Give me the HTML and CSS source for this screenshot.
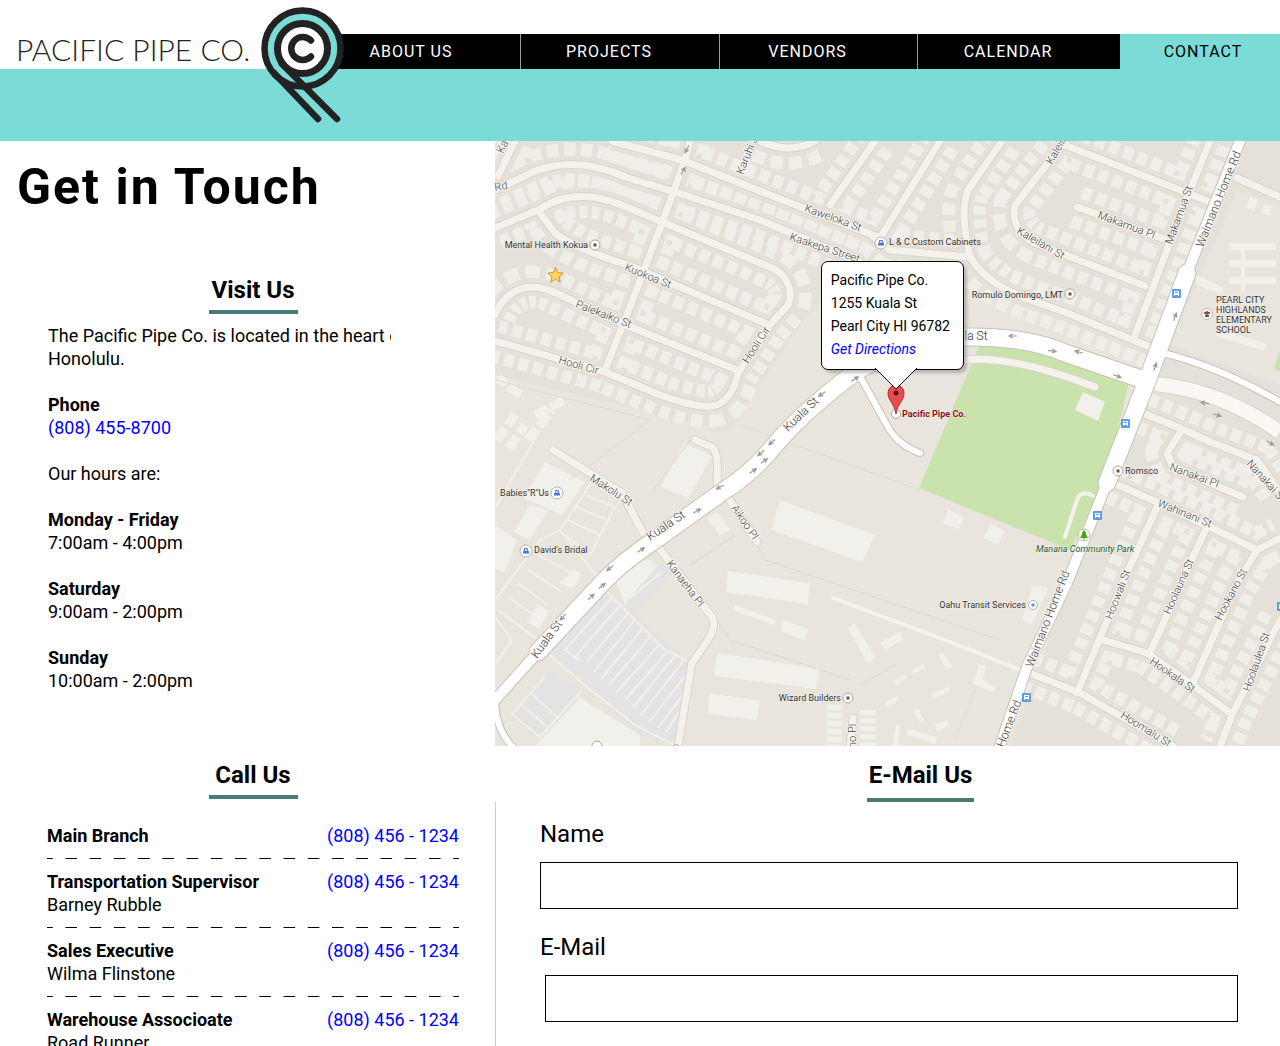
FILE: index.html
```html
<!DOCTYPE html>
<html lang="en">
<head>
<meta charset="utf-8">
<meta name="viewport" content="width=device-width, initial-scale=1">
<title>Contact - Pacific Pipe Co.</title>
<link rel="stylesheet" href="styles.css">
</head>
<body>
<header class="site-header">
  <div class="top-bar">
    <a class="brand" href="#">PACIFIC PIPE CO.</a>
    <nav class="main-nav" aria-label="Main">
      <a href="#">ABOUT US</a>
      <a href="#">PROJECTS</a>
      <a href="#">VENDORS</a>
      <a href="#">CALENDAR</a>
      <a class="current" href="#contact">CONTACT</a>
    </nav>
    <svg class="mark" viewBox="0 0 84 116" aria-hidden="true">
      <circle cx="41.500" cy="41.500" r="38" fill="#7bdbd6" stroke="#222" stroke-width="6.500"/>
      <path d="M13 66 57 112M21 57 76 112" fill="none" stroke="#222" stroke-width="6.500" stroke-linecap="round"/>
      <circle cx="41.500" cy="41.500" r="25" fill="#fff" stroke="#222" stroke-width="7"/>
      <path d="M50 33.500A11.500 11.500 0 1 0 50 49.500" fill="none" stroke="#222" stroke-width="6.500" stroke-linecap="round"/>
    </svg>
  </div>
</header>

<main class="page" id="contact">
  <div class="intro">
    <h1>Get in Touch</h1>
    <section class="visit">
      <h2>Visit Us</h2>
      <div class="visit-text">
        <p>The Pacific Pipe Co. is located in the heart of<br>Honolulu.</p>
        <p><strong>Phone</strong><br><a href="tel:8084558700">(808) 455-8700</a></p>
        <p>Our hours are:</p>
        <p><strong>Monday - Friday</strong><br>7:00am - 4:00pm</p>
        <p><strong>Saturday</strong><br>9:00am - 2:00pm</p>
        <p><strong>Sunday</strong><br>10:00am - 2:00pm</p>
      </div>
    </section>
  </div>

  <div class="map">
    <svg viewBox="495 141 785 605" role="img" aria-label="Street map around Pacific Pipe Co.">
      <defs>
        <g id="blocks">
          <path d="M495 190 535 171Q578 155 628 178L675 192"/>
          <path d="M495 228 538 210C556 198 575 195 592 197C615 200 640 213 662 222L772 268C790 276 793 295 788 305L768 327 738 373C735 390 725 405 712 406C700 408 680 402 660 395L605 372 495 341"/>
          <path d="M538 210 555 233C570 245 595 255 628 265L767 324"/>
          <path d="M690 141 685 160 662 223 625 320 605 370"/>
          <path d="M495 315C502 298 515 288 530 287C545 286 560 295 575 302L628 326 737 370"/>
          <path d="M612 141 682 160 770 195 878 237M873 236 890 250 970 257C985 280 1005 290 1025 298L1067 313 1150 347"/>
          <path d="M675 192 760 220 860 262"/>
          <path d="M875 141 830 205M940 141 880 238"/>
          <path d="M1002 141 968 190C962 205 963 225 970 257"/>
          <path d="M1065 141 1015 205C1011 222 1020 235 1035 243L1145 286"/>
          <path d="M1062 144 1180 190 1212 203"/>
          <path d="M1210 141 1182 210 1135 335"/>
          <path d="M1077 207 1167 240"/>
          <path d="M760 141Q790 155 815 141M515 141 498 176"/>
          <path d="M1113 483 1157 502 1210 527 1257 550 1280 538"/>
          <path d="M1157 507 1127 573 1077 693"/>
          <path d="M1207 527 1190 563 1150 653"/>
          <path d="M1103 640 1147 653 1190 683 1230 713"/>
          <path d="M1257 550 1237 583 1193 683"/>
          <path d="M1280 620 1233 713 1220 746"/>
          <path d="M1027 672 1080 693 1173 746"/>
          <path d="M1180 433 1167 453 1173 467 1243 497"/>
          <path d="M1143 413 1177 427 1213 443 1257 460 1280 493"/>
        </g>
        <g id="lanes">
          <path d="M553 450 622 493 643 533"/>
          <path d="M655 543 712 617C717 628 712 635 692 663L678 746"/>
          <path d="M725 493 757 542M695 440 712 447Q719 452 717 482"/>
          <path d="M1237 178 1280 197"/>
          <path d="M853 718 850 746"/>
          <path d="M963 360Q1013 355 1095 387"/>
        </g>
        <g id="avenues">
          <path d="M538 652 605 580Q625 560 655 540L725 490Q750 475 775 445T845 380Q900 338 963 337T1065 353L1147 381"/>
          <path d="M1187 273 1147 381 1107 483"/>
        </g>
        <g id="roads">
          <path d="M1240 141 1187 273M1107 483 1067 583 1027 667 1000 746"/>
          <path d="M540 650 495 700"/>
        </g>
        <g id="byways">
          <path d="M862 380 888 427Q898 445 920 453"/>
          <path d="M1163 353Q1220 367 1280 402M495 698Q495 730 514 748"/>
        </g>
        <g id="bus"><rect width="9" height="9" rx="1" fill="#5d9df0"/><path d="M2 2h5v4H2z" fill="#fff"/><path d="M3 3h3v1H3z" fill="#5d9df0"/><path d="M2 6h1v1H2zM6 6h1v1H6z" fill="#fff"/></g>
        <g id="shop"><circle r="6" fill="#fff" stroke="#b9b4ab"/><path d="M-2.500-.5h5l.8 3h-6.600z" fill="#4d76d6"/><path d="M-1.500-.5v-2h3v2" fill="none" stroke="#4d76d6"/></g>
        <g id="poi"><circle r="5" fill="#fff" stroke="#aaa59c"/><rect x="-1.500" y="-1.500" width="3" height="3" fill="#7d4a35"/></g>
        <path id="arrow" d="M-4 0H3M0-2 4 0 0 2" fill="none" stroke="#999" stroke-width="1.200"/>
      </defs>

      <rect class="land" x="495" y="141" width="785" height="605"/>
      <path class="district" d="M495 141H1280V746H1010L1105 483 1150 380 1060 345 965 325 850 330 730 432 495 375Z"/>
      <path class="land" d="M850 262Q965 262 990 290L1150 350V480L1010 746H850L730 430 790 340ZM1238 190 1280 205V385L1170 345Z"/>
      <path class="district" d="M1143 410 1280 440V746H1010L1105 483Z"/>
      <use class="houses" href="#blocks"/>
      <use class="verges" href="#blocks"/>

      <g class="buildings">
        <path d="M780 500 875 535 862 562 771 530ZM728 571 810 583 808 604 726 592ZM717 653 820 669 816 689 714 676ZM709 693 760 701 757 720 708 714ZM735 605 776 620 774 625 733 610ZM783 620 808 629 804 640 781 631ZM848 628 855 624 876 658 867 663ZM684 443 712 456 688 498 661 487ZM545 462 585 482 562 515 524 498ZM707 518 717 512 730 530 719 535ZM530 505 548 510 530 540 514 532ZM948 510 964 517 959 529 943 523ZM991 524 1005 531 998 545 983 538ZM1033 585 1048 588 1032 625 1022 620ZM979 664 986 666 983 680 997 688 993 692 973 684ZM880 643 900 632 903 640 885 650ZM610 563 650 560 660 568 625 605ZM575 570 582 575 573 589 559 583ZM580 698 640 735V746H535ZM538 604 549 611 540 629 527 622ZM495 525 517 540 505 572 495 570Z"/>
        <path d="M938 655 942 652 953 667 947 670ZM893 681 905 674 907 678 896 685ZM912 670 924 664 925 668 914 674ZM884 702 897 696 899 700 887 707ZM931 694 949 686 950 691 934 698ZM913 710 919 710 924 721 920 722ZM935 724 947 720 949 726 937 731ZM896 725 900 725 898 746H893ZM908 729 937 737 935 744 907 735ZM1229 243H1276V250H1229ZM1229 260H1276V267H1229ZM1229 277H1276V284H1229ZM1241 243H1245V292H1241ZM1250 197 1258 200 1254 211 1246 208ZM1264 205 1272 206 1270 216 1261 213ZM1219 329 1267 344 1264 351 1216 336ZM1197 275 1224 288 1221 294 1196 285Z"/>
        <path d="M497 440 517 412M509 448 525 425M535 415 565 400M520 395 498 378M528 440 552 410" class="shed"/>
        <path d="M834 705V746M868 710V746" class="shed rows"/>
      </g>

      <g class="parking">
        <path d="M605 590 692 663 676 746 640 735 548 652ZM547 672 584 690 541 738 510 716ZM660 563 673 573 636 614 624 604Z"/>
        <path class="stripes" d="M605 590 630 615 665 650 692 663M612 597 565 650 580 661M620 605 575 657M628 613 586 663M635 620 594 672M643 628 601 679M651 636 609 685M659 645 616 693M667 652 625 700M675 656 633 707M684 660 641 715M690 670 649 722M688 688 658 728M684 705 666 732M550 655 582 683 635 725 676 746M545 677 512 714 540 737 582 690M530 692 558 718M520 704 549 728"/>
        <path class="stripes" d="M540 430 495 508M593 480 560 530 540 540 495 600M560 530 600 580M538 555 575 575M528 570 562 592M518 583 548 605M508 597 538 618M498 610 545 645M585 495 615 507 590 555 565 535M577 507 607 520M568 520 600 535M495 617 512 640 495 665M630 598 662 572"/>
      </g>
      <path class="lines" d="M735 500 765 560 795 570 1000 640M920 490 740 425M717 620 730 640 850 680M650 495 690 440M690 565 735 535M495 380 650 420 570 480M975 690 955 740M860 685 895 665"/>

      <path class="park" d="M983 337Q1060 343 1131 374L1105 483 1070 550 919 488ZM1280 350V372L1274 369Z"/>
      <path class="building" d="M1083 392 1105 402 1098 421 1075 410Z"/>
      <path class="trail" d="M1093 496Q1081 489 1077 500L1065 537"/>
      <path class="trail" d="M833 598 953 643 1025 672"/>

      <use class="edge e-block" href="#blocks"/><use class="edge e-block" href="#lanes"/>
      <use class="fill f-block" href="#blocks"/><use class="fill f-block" href="#lanes"/>
      <path class="wide-edge" d="M1155 384Q1220 390 1280 432"/><path class="wide" d="M1155 384Q1220 390 1280 432"/>
      <use class="edge e-by" href="#byways"/><use class="edge e-road" href="#roads"/><use class="edge e-ave" href="#avenues"/>
      <use class="fill f-by" href="#byways"/><use class="fill f-road" href="#roads"/><use class="fill f-ave" href="#avenues"/>

      <g>
        <use href="#arrow" transform="translate(697 511) rotate(-30)"/><use href="#arrow" transform="translate(720 487) rotate(150)"/>
        <use href="#arrow" transform="translate(641 550) rotate(-35)"/><use href="#arrow" transform="translate(610 568) rotate(140)"/>
        <use href="#arrow" transform="translate(602 586) rotate(-40)"/><use href="#arrow" transform="translate(591 597) rotate(-45)"/>
        <use href="#arrow" transform="translate(563 617) rotate(135)"/><use href="#arrow" transform="translate(753 471) rotate(-35)"/>
        <use href="#arrow" transform="translate(764 461) rotate(-35)"/><use href="#arrow" transform="translate(761 453) rotate(140)"/>
        <use href="#arrow" transform="translate(772 442) rotate(140)"/><use href="#arrow" transform="translate(822 394) rotate(145)"/>
        <use href="#arrow" transform="translate(855 379) rotate(-35)"/><use href="#arrow" transform="translate(1013 336) rotate(180)"/>
        <use href="#arrow" transform="translate(1052 351) rotate(8)"/><use href="#arrow" transform="translate(1079 352) rotate(195)"/>
        <use href="#arrow" transform="translate(1117 376) rotate(18)"/><use href="#arrow" transform="translate(1155 367) rotate(-70)"/>
        <use href="#arrow" transform="translate(1175 317) rotate(-70)"/><use href="#arrow" transform="translate(1205 403) rotate(190)"/>
        <use href="#arrow" transform="translate(1217 415) rotate(15)"/><use href="#arrow" transform="translate(1270 443) rotate(30)"/>
        <use href="#arrow" transform="translate(687 149) rotate(120)"/><use href="#arrow" transform="translate(683 171) rotate(-60)"/>
      </g>

      <g class="street-names">
        <text transform="translate(503 154) rotate(-65)">Kau</text>
        <text transform="translate(495 191) rotate(-10)">Rd</text>
        <text transform="translate(743 175) rotate(-68)">Karuhi St</text>
        <text transform="translate(804 211) rotate(20)">Kaweloka St</text>
        <text transform="translate(789 240) rotate(18)">Kaakepa Street</text>
        <text transform="translate(624 270) rotate(22)">Kuokoa St</text>
        <text transform="translate(575 307) rotate(21)">Palekaiko St</text>
        <text transform="translate(558 363) rotate(16)">Hooli Cir</text>
        <text transform="translate(748 364) rotate(-57)">Hooli Cir</text>
        <text transform="translate(1052 165) rotate(-60)">Kaleilani</text>
        <text transform="translate(1016 233) rotate(30)">Kaleilani St</text>
        <text transform="translate(1097 218) rotate(20)">Makamua Pl</text>
        <text transform="translate(1172 245) rotate(-70)">Makamua St</text>
        <text class="big" transform="translate(1203 248) rotate(-68)">Waimano Home Rd</text>
        <text class="big" transform="translate(788 432) rotate(-44)">Kuala St</text>
        <text class="big" transform="translate(650 541) rotate(-34)">Kuala St</text>
        <text class="big" transform="translate(537 659) rotate(-54)">Kuala St</text>
        <text class="big" transform="translate(944 340)">Kuala St</text>
        <text transform="translate(589 480) rotate(33)">Makolu St</text>
        <text transform="translate(731 508) rotate(56)">Aikoo Pl</text>
        <text transform="translate(666 564) rotate(53)">Kanaeha Pl</text>
        <text class="big" transform="translate(1033 668) rotate(-69)">Waimano Home Rd</text>
        <text class="big" transform="translate(1004 748) rotate(-69)">Home Rd</text>
        <text transform="translate(1169 470) rotate(20)">Nanakai Pl</text>
        <text transform="translate(1246 464) rotate(48)">Nanakai St</text>
        <text transform="translate(1157 506) rotate(22)">Wahinani St</text>
        <text transform="translate(1112 620) rotate(-69)">Hoowali St</text>
        <text transform="translate(1170 615) rotate(-66)">Hoolauna St</text>
        <text transform="translate(1221 621) rotate(-62)">Hookano St</text>
        <text transform="translate(1250 692) rotate(-71)">Hoolaulea St</text>
        <text transform="translate(1149 663) rotate(35)">Hookala St</text>
        <text transform="translate(1120 717) rotate(32)">Hoomalu St</text>
        <text transform="translate(856 748) rotate(-90)">no Pl</text>
      </g>

      <g class="places">
        <text class="before" x="588" y="248">Mental Health Kokua</text><use href="#poi" x="595" y="245"/>
        <text x="889" y="245">L &amp; C Custom Cabinets</text><use href="#shop" x="881" y="243"/>
        <text class="before" x="1063" y="298">Romulo Domingo, LMT</text><use href="#poi" x="1070" y="294"/>
        <text class="before" x="549" y="496">Babies"R"Us</text><use href="#shop" x="557" y="493"/>
        <text x="534" y="553">David's Bridal</text><use href="#shop" x="526" y="551"/>
        <text class="before" x="1026" y="608">Oahu Transit Services</text><circle cx="1033" cy="605" r="4.500" fill="#fff" stroke="#b9b4ab"/><circle cx="1033" cy="605" r="1.800" fill="#5d9df0"/>
        <text class="before" x="841" y="701">Wizard Builders</text><use href="#poi" x="848" y="698"/>
        <text x="1125" y="474">Romsco</text><use href="#poi" x="1118" y="471"/>
        <text x="1216" y="303">PEARL CITY</text><text x="1216" y="313">HIGHLANDS</text><text x="1216" y="323">ELEMENTARY</text><text x="1216" y="333">SCHOOL</text>
        <circle cx="1207" cy="314" r="5.500" fill="#fff" stroke="#b9b4ab"/><path d="M1203 313 1207 311 1211 313 1207 315ZM1205 315V317H1209V315" fill="#7d4a35"/>
        <text class="park-name" x="1036" y="552">Manana Community Park</text>
        <circle cx="1084" cy="535" r="6" fill="#fff" stroke="#b9b4ab"/><path d="M1084 530 1086.500 533.500H1085.500L1088 538H1080L1082.500 533.500H1081.500ZM1083.500 538H1084.500V540H1083.500Z" fill="#4ba314"/>
        <text class="home" x="902" y="417">Pacific Pipe Co.</text>
      </g>
      <use href="#bus" x="1172" y="289"/><use href="#bus" x="1121" y="419"/><use href="#bus" x="1093" y="511"/><use href="#bus" x="1022" y="693"/><use href="#bus" x="1277" y="602"/>
      <path d="M555.500 267.500 557.700 272.500 563 273 559 276.800 560.200 282 555.500 279.200 550.800 282 552 276.800 548 273 553.300 272.500Z" fill="#ffd65a" stroke="#d29347"/>
      <circle cx="896" cy="414" r="4.500" fill="#fff" stroke="#aaa59c"/>
      <path d="M896 414C895 404 888 401 888 393A8 8 0 0 1 904 393C904 401 897 404 896 414Z" fill="#ea4b4f" stroke="#b72d31"/><circle cx="896" cy="393" r="2.500" fill="#5f1113"/>
      <path d="M592 746A5 5 0 0 1 602 746M673 746A4 4 0 0 1 679 746" fill="#fff" stroke="#aaa59c"/>
    </svg>
    <div class="callout">
      <address>Pacific Pipe Co.<br>1255 Kuala St<br>Pearl City HI 96782<br><a href="#">Get Directions</a></address>
      <svg class="tail" viewBox="0 0 44 23" aria-hidden="true"><path d="M1 0 22 21 43 0" fill="#fff" stroke="#000"/></svg>
    </div>
  </div>

  <section class="call">
    <h2>Call Us</h2>
    <ul class="people">
      <li><div><strong>Main Branch</strong></div><a href="tel:8084561234">(808) 456 - 1234</a></li>
      <li><div><strong>Transportation Supervisor</strong><br>Barney Rubble</div><a href="tel:8084561234">(808) 456 - 1234</a></li>
      <li><div><strong>Sales Executive</strong><br>Wilma Flinstone</div><a href="tel:8084561234">(808) 456 - 1234</a></li>
      <li><div><strong>Warehouse Associoate</strong><br>Road Runner</div><a href="tel:8084561234">(808) 456 - 1234</a></li>
    </ul>
  </section>

  <section class="email">
    <h2>E-Mail Us</h2>
    <form class="email-form">
      <label for="name">Name</label>
      <input id="name" type="text">
      <label for="mail">E-Mail</label>
      <input class="inset" id="mail" type="email">
    </form>
  </section>
</main>
</body>
</html>
```
FILE: styles.css
```css
* { box-sizing: border-box; }

body {
  margin: 0;
  background: #fff;
  color: #000;
  font: 18px/23px Roboto, "Liberation Sans", sans-serif;
}

a { color: #00f; text-decoration: none; }
h1, h2, p, ul { margin: 0; padding: 0; }

/* Header */
.site-header { padding-bottom: 72px; background: #7bdbd6; }

.top-bar {
  position: relative;
  display: flex;
  align-items: flex-end;
  height: 69px;
  background: #fff;
}

.brand {
  width: 324px;
  padding-left: 16px;
  color: #222;
  font: 300 30px/40px Lato, sans-serif;
  white-space: nowrap;
}

.main-nav {
  flex: 1;
  display: grid;
  grid-template-columns: 196fr 199fr 198fr 203fr 160fr;
  height: 35px;
}

.main-nav a {
  padding-right: 22px;
  border-left: 1px solid #999;
  background: #000;
  color: #fff;
  font-size: 16px;
  line-height: 35px;
  letter-spacing: 1px;
  text-align: center;
}

.main-nav a:first-child { border-left: 0; }

.main-nav .current {
  padding: 0 0 0 6px;
  border-left: 0;
  background: #7bdbd6;
  color: #000;
}

.mark {
  position: absolute;
  top: 7px;
  left: 261px;
  width: 84px;
  height: 116px;
}

/* Page grid */
.page {
  display: grid;
  grid-template-columns: 495fr 785fr;
}

h1 {
  padding: 20px 0 0 17px;
  font-size: 50px;
  line-height: 52px;
  letter-spacing: 2px;
}

h2 {
  width: max-content;
  min-width: 89px;
  margin: 0 auto;
  padding: 0 2px 5px;
  border-bottom: 4px solid #467c74;
  font-size: 24px;
  line-height: 30px;
  text-align: center;
}

.visit, .call { padding: 0 36px 0 47px; }
.visit { padding-top: 62px; }

.visit-text {
  width: 344px;
  padding: 10px 0 0 1px;
  overflow: hidden;
  white-space: nowrap;
}

.visit-text p + p { margin-top: 23px; }

/* Map */
.map { position: relative; }
.map > svg { display: block; width: 100%; height: auto; overflow: hidden; }

.land { fill: #e9e5dd; }
.district { fill: #e5e1d8; }
.houses, .verges, .edge, .fill { fill: none; stroke-linejoin: round; }
.houses { stroke: #f0eee8; stroke-width: 43px; stroke-dasharray: 10 5; }
.verges { stroke: #e5e1d8; stroke-width: 18px; }
.edge { stroke: #c8c2b7; }
.edge, .fill { stroke-linecap: round; }
.fill { stroke: #fff; }
.e-block { stroke: #d9d4ca; stroke-width: 9px; }
.f-block { stroke: #f5f2ec; stroke-width: 7px; }
.e-by { stroke-width: 8px; }
.f-by { stroke-width: 6px; }
.e-road { stroke-width: 12px; }
.f-road { stroke-width: 10px; }
.e-ave { stroke-width: 19px; }
.f-ave { stroke-width: 17px; }
.wide, .wide-edge { fill: none; stroke: #f9f8f4; stroke-width: 14px; }
.wide-edge { stroke: #d9d4ca; stroke-width: 16px; }
.building, .buildings { fill: #f1f0eb; }
.shed { fill: none; stroke: #f1f0eb; stroke-width: 9px; stroke-dasharray: 14 4; }
.rows { stroke-width: 16px; stroke-dasharray: 5 3; }
.parking { fill: #e4e3e4; }
.stripes { fill: none; stroke: #f3f0e9; stroke-width: 2px; }
.lines { fill: none; stroke: #dfdad1; }
.park { fill: #cae2ab; }
.trail { fill: none; stroke: #f5f2ec; stroke-width: 4px; stroke-linecap: round; }

.street-names { fill: #444; font: 300 11px Roboto, sans-serif; }
.street-names text { stroke: #f8f6f2; stroke-width: 2px; paint-order: stroke; }
.street-names .big { font-size: 12px; }
.places { fill: #333; font: 400 9px Roboto, sans-serif; }
.places text { stroke: #f3f0ea; stroke-width: 1px; paint-order: stroke; }
.places .before { text-anchor: end; }
.places .park-name { fill: #1f5f35; font-style: italic; }
.places .home { fill: #8c0d25; font-weight: 700; }

.callout {
  position: absolute;
  top: 19.8%;
  left: 41.5%;
  width: 143px;
  height: 109px;
  padding: 7px 9px;
  border: 1px solid #000;
  border-radius: 7px;
  background: #fff;
  box-shadow: 3px 3px 3px #8888;
  font-size: 14px;
  white-space: nowrap;
}

.callout address { font-style: normal; }
.callout a { font-style: italic; }

.tail {
  position: absolute;
  top: 106px;
  left: 52px;
  width: 44px;
  height: 23px;
}

/* Phone list */
.call { padding-top: 14px; }

.people { padding-top: 25px; list-style: none; }

.people li {
  display: flex;
  justify-content: space-between;
  padding-bottom: 12px;
  background: linear-gradient(90deg, #000 6px, transparent 6px 18px, #000 18px) bottom left / 24px 1px;
  background-repeat: round no-repeat;
}

.people li + li { padding-top: 11px; }
.people li:last-child { padding-bottom: 0; background: none; }

/* E-mail form */
.email { display: flex; flex-direction: column; padding-top: 14px; }
.email h2 { position: relative; left: 33px; padding-bottom: 8px; }

.email-form {
  flex: 1;
  display: flex;
  flex-direction: column;
  padding: 17px 42px 0 44px;
  border-left: 1px solid #ccc;
}

.email-form label { font-size: 24px; line-height: 30px; }

.email-form input {
  height: 47px;
  margin: 13px 0 23px;
  padding: 0 12px;
  border: 1px solid #000;
  border-radius: 0;
  background: #fff;
  font: inherit;
}

.email-form .inset { margin-left: 5px; }
```
